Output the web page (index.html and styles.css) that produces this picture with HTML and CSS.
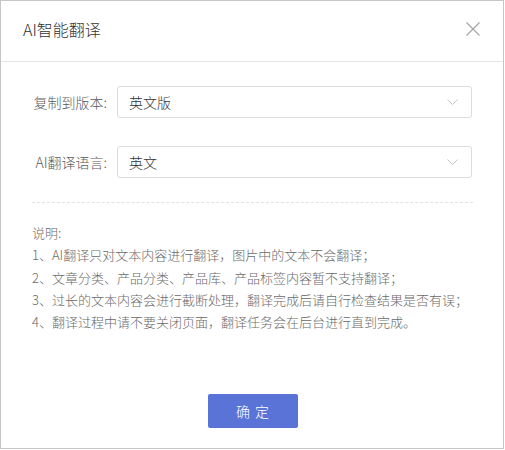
FILE: index.html
```html
<!DOCTYPE html>
<html lang="zh-CN">
<head>
<meta charset="utf-8">
<title>AI智能翻译</title>
<link rel="stylesheet" href="styles.css">
</head>
<body>
<div class="dialog">
  <div class="dialog-header">
    <div class="dialog-title">AI智能翻译</div>
    <button class="close-btn" aria-label="关闭">
      <svg width="14" height="14" viewBox="0 0 14 14"><path d="M0.5 0.5 L13.5 13.5 M13.5 0.5 L0.5 13.5" stroke="#a3a3a3" stroke-width="1.1" fill="none"/></svg>
    </button>
  </div>
  <div class="dialog-body">
    <div class="form-row">
      <label class="form-label">复制到版本:</label>
      <div class="select">
        <span class="select-value">英文版</span>
        <svg class="chevron" width="11" height="6" viewBox="0 0 11 6"><path d="M0.5 0.5 L5.5 5.5 L10.5 0.5" stroke="#c4c4c4" stroke-width="1" fill="none"/></svg>
      </div>
    </div>
    <div class="form-row">
      <label class="form-label">AI翻译语言:</label>
      <div class="select">
        <span class="select-value">英文</span>
        <svg class="chevron" width="11" height="6" viewBox="0 0 11 6"><path d="M0.5 0.5 L5.5 5.5 L10.5 0.5" stroke="#c4c4c4" stroke-width="1" fill="none"/></svg>
      </div>
    </div>
    <div class="divider"></div>
    <div class="notes">
      <p>说明:</p>
      <p>1、AI翻译只对文本内容进行翻译，图片中的文本不会翻译；</p>
      <p>2、文章分类、产品分类、产品库、产品标签内容暂不支持翻译；</p>
      <p>3、过长的文本内容会进行截断处理，翻译完成后请自行检查结果是否有误；</p>
      <p>4、翻译过程中请不要关闭页面，翻译任务会在后台进行直到完成。</p>
    </div>
  </div>
  <div class="dialog-footer">
    <button class="btn-primary">确 定</button>
  </div>
</div>
</body>
</html>
```
FILE: styles.css
```css
html, body {
  margin: 0;
  padding: 0;
  background: #ffffff;
}
body {
  font-family: "Noto Sans CJK SC", "Liberation Sans", sans-serif;
  font-weight: 300;
  color: #333;
}
.dialog {
  box-sizing: border-box;
  width: 504px;
  height: 449px;
  border: 1px solid #c6c6c6;
  display: flex;
  flex-direction: column;
  background: #fff;
}
.dialog-header {
  box-sizing: border-box;
  height: 61px;
  border-bottom: 1px solid #e4e4e4;
  display: flex;
  align-items: center;
  justify-content: space-between;
  padding: 0 22px 4px 22px;
}
.dialog-title {
  font-size: 16px;
  line-height: 20px;
  color: #333;
}
.close-btn {
  border: 0;
  background: none;
  padding: 0;
  width: 14px;
  height: 14px;
  display: flex;
  margin-right: 1px;
  cursor: pointer;
}
.dialog-body {
  flex: 1;
  padding: 24px 31px 0 31px;
}
.form-row {
  display: flex;
  align-items: center;
  margin-bottom: 28px;
}
.form-row + .form-row {
  margin-bottom: 24px;
}
.form-label {
  box-sizing: border-box;
  width: 85px;
  padding-right: 10px;
  text-align: right;
  font-size: 14px;
  line-height: 20px;
  color: #5a5a5a;
  white-space: nowrap;
}
.select {
  box-sizing: border-box;
  width: 355px;
  height: 32px;
  border: 1px solid #dcdcdc;
  border-radius: 3px;
  display: flex;
  align-items: center;
  justify-content: space-between;
  padding: 0 13px 0 11px;
}
.select-value {
  font-size: 14px;
  line-height: 20px;
  color: #333;
}
.chevron {
  display: block;
}
.divider {
  border-top: 1px dashed #e2e2e2;
  width: 441px;
}
.notes {
  padding-top: 19px;
  font-size: 13px;
  line-height: 22.3px;
  color: #6a6a6a;
}
.notes p {
  margin: 0;
  white-space: nowrap;
}
.dialog-footer {
  display: flex;
  justify-content: center;
  padding-bottom: 20px;
  padding-left: 2px;
}
.btn-primary {
  width: 90px;
  height: 34px;
  border: 0;
  border-radius: 2px;
  background: #5a73d7;
  color: #fff;
  font-family: "Noto Sans CJK SC", sans-serif;
  font-weight: 300;
  font-size: 14px;
  letter-spacing: 1px;
  cursor: pointer;
}
```
